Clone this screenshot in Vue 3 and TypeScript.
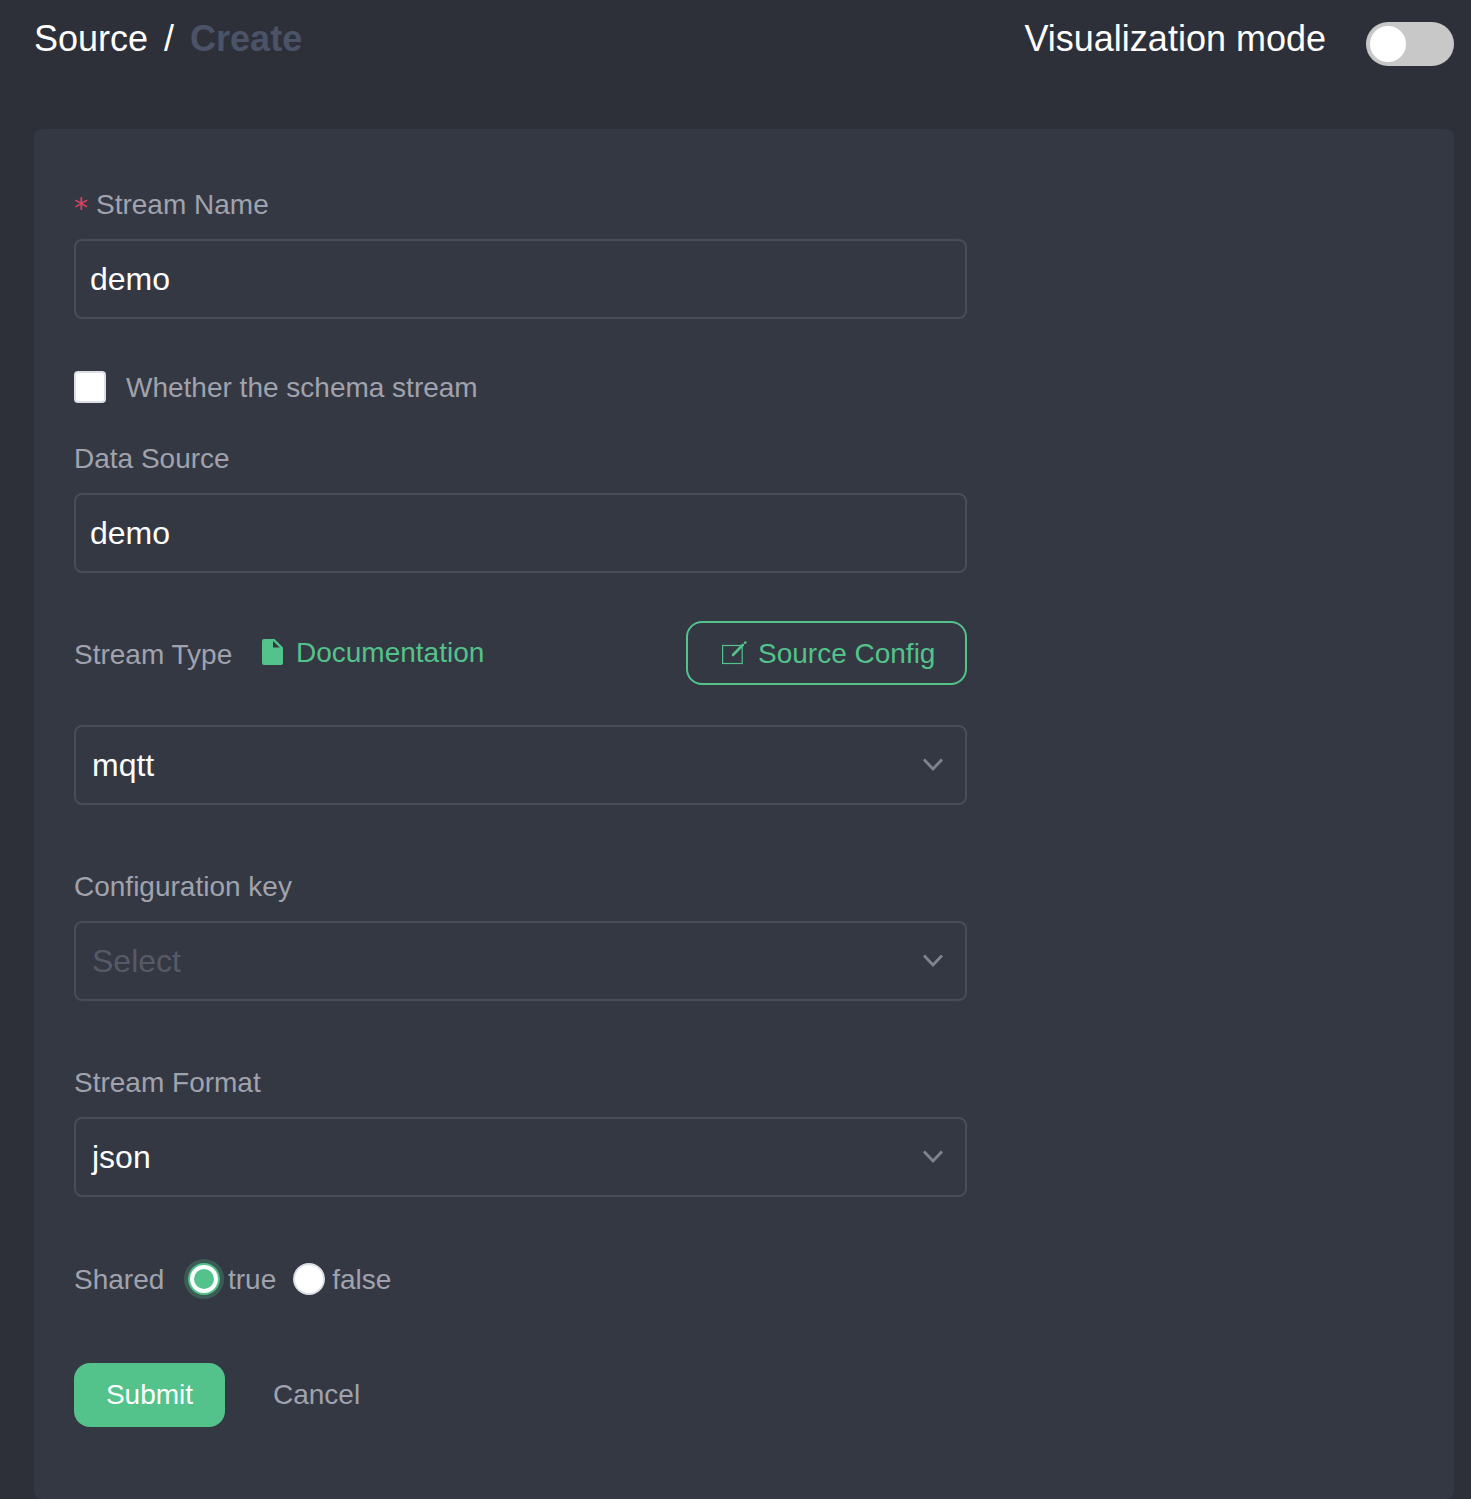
<script setup lang="ts">
const title = 'Source'
</script>

<template>
  <div class="page">
    <header class="head">
      <div class="crumbs">
        <span class="crumb">{{ title }}</span>
        <span class="sep">/</span>
        <span class="current">Create</span>
      </div>
      <div class="mode">
        <span class="mode-text">Visualization mode</span>
        <span class="switch"><span class="knob"></span></span>
      </div>
    </header>
    <main class="card">
      <form class="form" @submit.prevent>
        <label class="label"><span class="star">*</span>Stream Name</label>
        <div class="box text">demo</div>

        <div class="check-row">
          <span class="check"></span>
          <span class="check-text">Whether the schema stream</span>
        </div>

        <label class="label data-label">Data Source</label>
        <div class="box text">demo</div>

        <div class="type-row">
          <span class="type-label">Stream Type</span>
          <a class="doc">
            <svg class="doc-icon" width="21" height="26" viewBox="0 0 21 26">
              <path fill="#53c28b" fill-rule="evenodd" d="M2 0H12.5L21 8.5V24A2 2 0 0 1 19 26H2A2 2 0 0 1 0 24V2A2 2 0 0 1 2 0ZM11 2V8.5H17.8Z" />
            </svg>
            Documentation
          </a>
          <button class="config" type="button">
            <svg class="edit-icon" width="26" height="24" viewBox="0 0 26 24">
              <rect x="0.6" y="4.5" width="19.6" height="18" fill="none" stroke="#53c28b" stroke-width="1.2" />
              <path fill="none" stroke="#53c28b" stroke-width="2.6" stroke-linecap="round" d="M11 14 20.8 4" />
              <path fill="none" stroke="#53c28b" stroke-width="2.4" stroke-linecap="round" d="M23 1.8 23.4 1.4" />
            </svg>
            Source Config
          </button>
        </div>

        <div class="box select">
          <span>mqtt</span>
          <svg class="chevron" width="20" height="13" viewBox="0 0 20 13"><path fill="none" stroke="#80838d" stroke-width="2.8" d="M1 1.5 10 11 19 1.5" /></svg>
        </div>

        <label class="label gap-label">Configuration key</label>
        <div class="box select placeholder">
          <span>Select</span>
          <svg class="chevron" width="20" height="13" viewBox="0 0 20 13"><path fill="none" stroke="#80838d" stroke-width="2.8" d="M1 1.5 10 11 19 1.5" /></svg>
        </div>

        <label class="label gap-label">Stream Format</label>
        <div class="box select">
          <span>json</span>
          <svg class="chevron" width="20" height="13" viewBox="0 0 20 13"><path fill="none" stroke="#80838d" stroke-width="2.8" d="M1 1.5 10 11 19 1.5" /></svg>
        </div>

        <div class="radio-row">
          <span class="shared">Shared</span>
          <span class="radio on"><span class="dot"></span></span>
          <span class="radio-text">true</span>
          <span class="radio off"></span>
          <span class="radio-text false-text">false</span>
        </div>

        <div class="actions">
          <button class="submit" type="button">Submit</button>
          <button class="cancel" type="button">Cancel</button>
        </div>
      </form>
    </main>
  </div>
</template>

<style>
html, body { margin: 0; background: #2e3039; }
</style>

<style scoped>
.page {
  box-sizing: border-box;
  height: 1499px;
  overflow: hidden;
  padding: 0 17px 0 34px;
  background: #2e3039;
  font-family: "Liberation Sans", Arial, sans-serif;
}
.head {
  height: 129px;
  display: flex;
  justify-content: space-between;
  align-items: flex-start;
}
.crumbs {
  display: flex;
  font-size: 36px;
  line-height: 78px;
  color: #fff;
}
.sep { margin: 0 16px; }
.current { color: #4a5367; font-weight: 700; }
.mode { display: flex; align-items: flex-start; }
.mode-text {
  font-size: 36px;
  line-height: 78px;
  color: #fff;
  margin-right: 40px;
}
.switch {
  margin-top: 22px;
  box-sizing: border-box;
  width: 88px;
  height: 44px;
  padding: 4px;
  border-radius: 22px;
  background: #c8c8c8;
}
.knob {
  display: block;
  width: 36px;
  height: 36px;
  border-radius: 50%;
  background: #fff;
}
.card {
  box-sizing: border-box;
  height: 1370px;
  padding: 55px 40px 0;
  border-radius: 8px;
  background: #343843;
}
.form { width: 893px; display: flex; flex-direction: column; }
.label {
  display: block;
  font-size: 28px;
  line-height: 42px;
  color: #a0a3ad;
  margin-bottom: 13px;
}
.star {
  font-family: "DejaVu Sans", sans-serif;
  font-size: 28px;
  color: #d8415f;
  margin-right: 8px;
  vertical-align: -4px;
  line-height: 1;
}
.data-label { margin-top: 35px; }
.gap-label { margin-top: 61px; }
.box {
  box-sizing: border-box;
  height: 80px;
  border: 2px solid #494c59;
  border-radius: 8px;
  font-size: 32px;
  color: #fff;
  display: flex;
  align-items: center;
}
.text { padding-left: 14px; }
.select {
  padding: 0 22px 0 16px;
  justify-content: space-between;
}
.chevron { margin-top: -1px; }
.placeholder { color: #565a66; }
.check-row {
  margin-top: 52px;
  height: 32px;
  display: flex;
  align-items: center;
}
.check {
  box-sizing: border-box;
  width: 32px;
  height: 32px;
  border: 2px solid #dcdfe6;
  border-radius: 4px;
  background: #fff;
}
.check-text { margin-left: 20px; padding-top: 2px; font-size: 28px; color: #a0a3ad; }
.type-row {
  margin: 48px 0 40px;
  height: 64px;
  display: flex;
  align-items: center;
}
.type-label { font-size: 28px; color: #a0a3ad; width: 188px; padding-top: 4px; }
.doc {
  display: flex;
  align-items: center;
  font-size: 28px;
  color: #53c28b;
}
.doc-icon { margin-right: 13px; margin-bottom: 2px; }
.config {
  margin-left: auto;
  box-sizing: border-box;
  width: 281px;
  height: 64px;
  padding: 2px 0 0 34px;
  display: flex;
  align-items: center;
  border: 2px solid #53c28b;
  border-radius: 16px;
  background: transparent;
  color: #53c28b;
  font: 28px "Liberation Sans", Arial, sans-serif;
}
.edit-icon { margin-right: 10px; margin-top: -2px; }
.radio-row {
  margin-top: 62px;
  height: 40px;
  display: flex;
  align-items: center;
}
.shared { font-size: 28px; color: #a0a3ad; width: 114px; padding-top: 2px; }
.radio {
  box-sizing: border-box;
  width: 32px;
  height: 32px;
  border-radius: 50%;
  background: #fff;
  display: flex;
  align-items: center;
  justify-content: center;
}
.on { border: 2px solid #53c28b; box-shadow: 0 0 0 4px rgba(83, 194, 139, 0.25); }
.off { border: 2px solid #dcdfe6; }
.dot { width: 20px; height: 20px; border-radius: 50%; background: #53c28b; }
.radio-text { margin: 0 17px 0 8px; padding-top: 2px; font-size: 28px; color: #a0a3ad; }
.false-text { margin-left: 7px; }
.actions { margin-top: 64px; display: flex; align-items: center; }
.submit {
  width: 151px;
  height: 64px;
  border: 0;
  border-radius: 16px;
  background: #53c28b;
  color: #fff;
  font: 28px "Liberation Sans", Arial, sans-serif;
}
.cancel {
  margin-left: 48px;
  padding: 0;
  border: 0;
  background: transparent;
  color: #a0a3ad;
  font: 28px "Liberation Sans", Arial, sans-serif;
}
</style>
